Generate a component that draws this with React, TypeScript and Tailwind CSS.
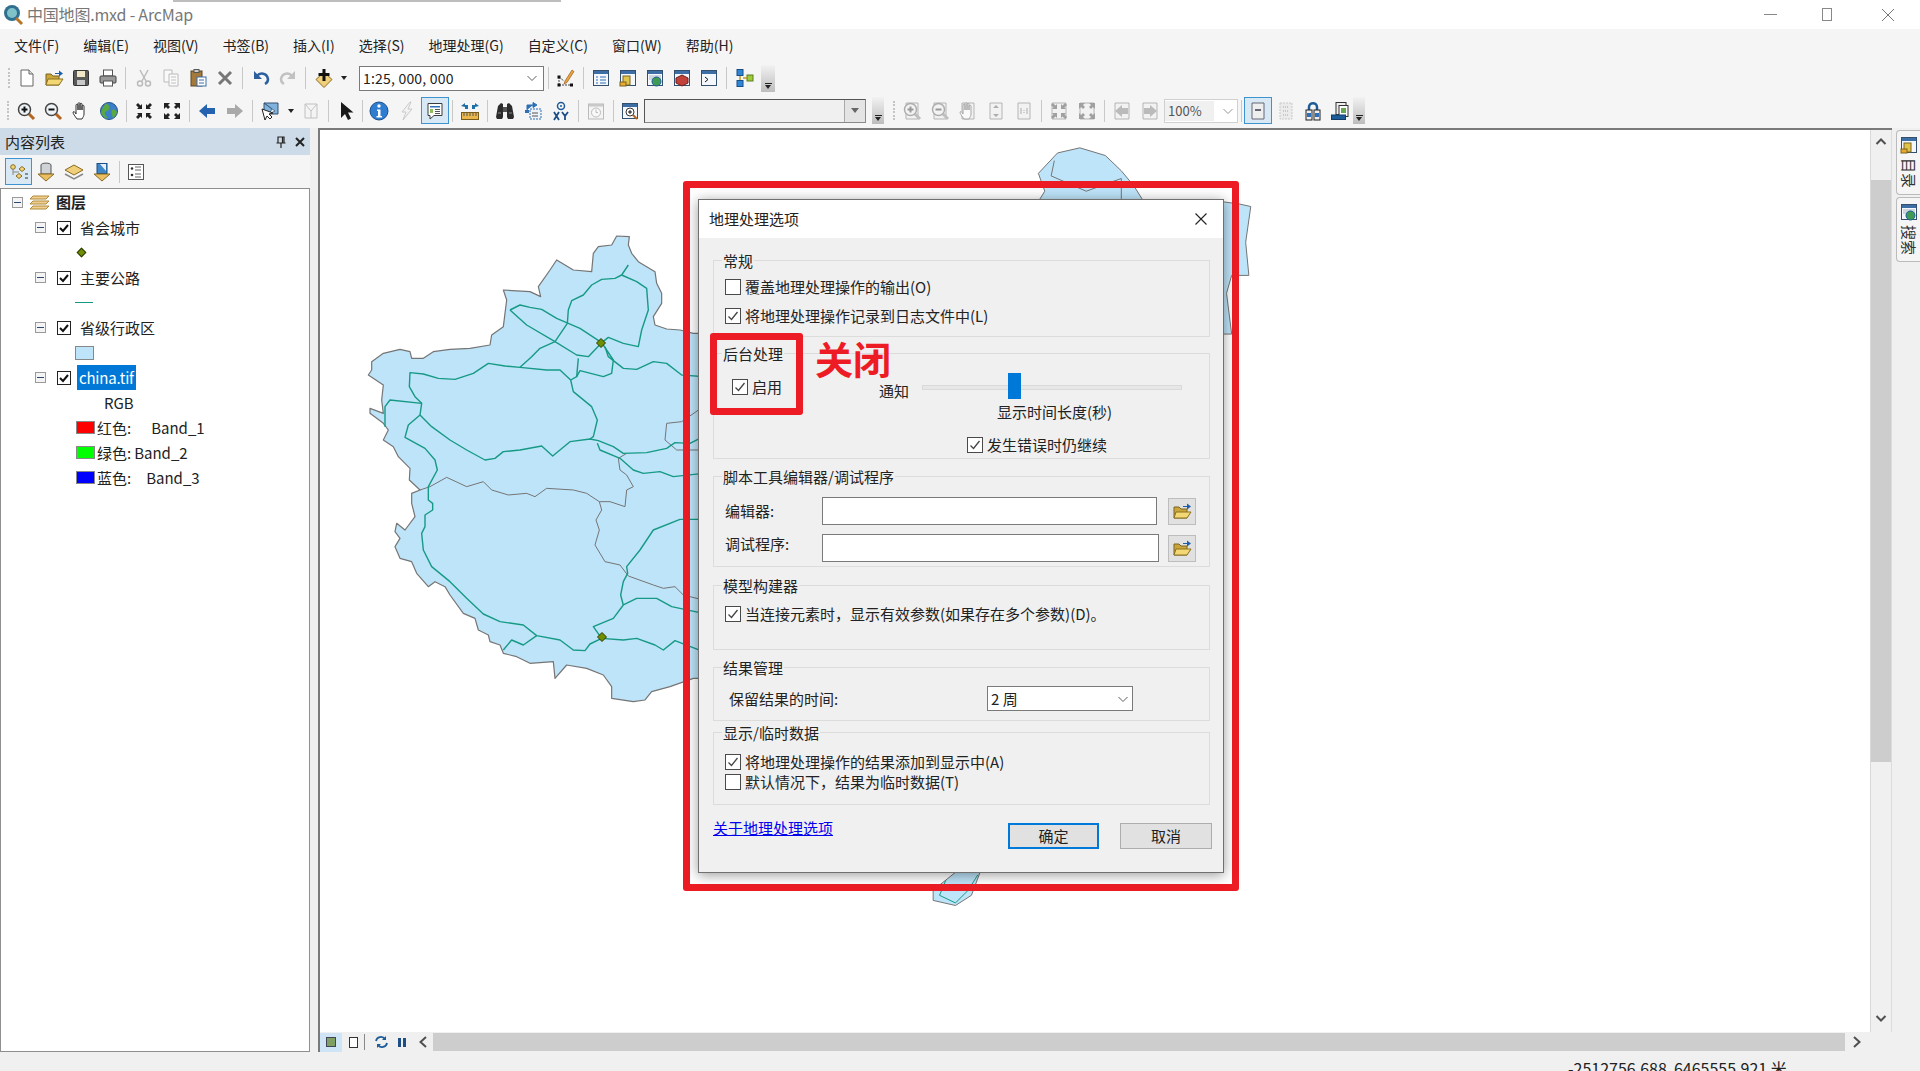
import type { ReactNode } from "react"

// little 20x20 toolbar drawings
const Ico = ({ children, off }: { children: ReactNode; off?: boolean }) => (
  <svg width="20" height="20" viewBox="0 0 20 20" className={off ? "opacity-40 grayscale" : ""}>
    {children}
  </svg>
)

const Win = ({ children }: { children?: ReactNode }) => (
  <>
    <rect x="2.5" y="2.5" width="15" height="15" fill="#f4f8fc" stroke="#34506e" />
    <rect x="3" y="3" width="14" height="3" fill="#3d6ea5" />
    {children}
  </>
)

const Folder = () => (
  <>
    <path d="M2 17V6h5l2 2h6v9z" fill="#c9a53a" stroke="#7a6420" />
    <path d="M2 17l2-6h15l-4 6z" fill="#f3d774" stroke="#8a7020" />
    <path d="M11 5h4V2.5l4 3-4 3V6h-4z" fill="#1f5fa8" />
  </>
)

const Lens = ({ mark }: { mark: "+" | "-" }) => (
  <>
    <path d="M13 13l5 5" stroke="#b5651d" strokeWidth="3" />
    <circle cx="8.5" cy="8.5" r="6" fill="#eef3f7" stroke="#444" strokeWidth="1.5" />
    <path d="M5.5 8.5h6" stroke="#111" strokeWidth="2" />
    {mark === "+" && <path d="M8.5 5.5v6" stroke="#111" strokeWidth="2" />}
  </>
)

const Hand = () => (
  <path
    d="M6 18c-2-3-4-5-4-7 1-1 2 0 3 2V4c0-1 2-1 2 0v5V2.5c0-1 2-1 2 0V9 3c0-1 2-1 2 0v6-4c0-1 2-1 2 0v8c0 2-1 3-2 5z"
    fill="#fff"
    stroke="#333"
  />
)

const Arrows = ({ out }: { out?: boolean }) => (
  <g fill="#222">
    {out ? (
      <path d="M2 2h6L6 4l2 2-2 2-2-2-2 2zM18 2v6l-2-2-2 2-2-2 2-2-2-2zM2 18v-6l2 2 2-2 2 2-2 2 2 2zM18 18h-6l2-2-2-2 2-2 2 2 2-2z" />
    ) : (
      <path d="M8 8H3l1.500-1.500L2 4l2-2 2.500 2.500L8 3zM12 8h5l-1.500-1.500L18 4l-2-2-2.500 2.500L12 3zM8 12H3l1.500 1.500L2 16l2 2 2.500-2.500L8 17zM12 12h5l-1.500 1.500L18 16l-2 2-2.500-2.500L12 17z" />
    )}
  </g>
)

const icons: Record<string, ReactNode> = {
  newDoc: (
    <>
      <path d="M4 2h8l4 4v12H4z" fill="#fff" stroke="#666" />
      <path d="M12 2v4h4" fill="#ddd" stroke="#666" />
    </>
  ),
  open: <Folder />,
  save: (
    <>
      <rect x="2.500" y="2.500" width="15" height="15" rx="1" fill="#5a5a5a" stroke="#333" />
      <rect x="6" y="3" width="8" height="6" fill="#f1e7c8" />
      <rect x="6" y="12" width="8" height="5" fill="#c9c9c9" />
    </>
  ),
  print: (
    <>
      <rect x="5.500" y="2" width="9" height="6" fill="#fff" stroke="#555" />
      <rect x="2" y="8" width="16" height="7" rx="1" fill="#9a9a9a" stroke="#444" />
      <rect x="5.500" y="13" width="9" height="5" fill="#fff" stroke="#555" />
    </>
  ),
  cut: (
    <>
      <path d="M6 2l6 11M14 2L8 13" stroke="#666" strokeWidth="1.500" />
      <circle cx="6" cy="15.500" r="2.500" fill="none" stroke="#666" strokeWidth="1.500" />
      <circle cx="14" cy="15.500" r="2.500" fill="none" stroke="#666" strokeWidth="1.500" />
    </>
  ),
  copy: (
    <>
      <path d="M3 2h8v12H3z" fill="#fff" stroke="#666" />
      <path d="M8 6h9v12H8z" fill="#fff" stroke="#666" />
      <path d="M10 9h5M10 12h5M10 15h5" stroke="#777" />
    </>
  ),
  paste: (
    <>
      <rect x="3" y="3" width="11" height="15" fill="#a5793a" stroke="#5c4420" />
      <rect x="6" y="1.500" width="5" height="3" fill="#ccc" stroke="#555" />
      <rect x="9" y="9" width="9" height="9" fill="#fff" stroke="#3a6ea8" />
      <path d="M11 12h5M11 15h5" stroke="#3a6ea8" />
    </>
  ),
  del: <path d="M4 4l12 12M16 4L4 16" stroke="#777" strokeWidth="3" />,
  undo: (
    <>
      <path d="M6 8c3-4 10-3 11 3 0 2-1 4-3 5" stroke="#2b5f9e" strokeWidth="2.500" fill="none" />
      <path d="M3 3v8h8z" fill="#2b5f9e" />
    </>
  ),
  redo: (
    <>
      <path d="M14 8c-3-4-10-3-11 3 0 2 1 4 3 5" stroke="#777" strokeWidth="2.500" fill="none" />
      <path d="M17 3v8H9z" fill="#777" />
    </>
  ),
  add: (
    <>
      <path d="M10 4l8 7.500-8 8-8-8z" fill="#f0cf7a" stroke="#8a6a20" />
      <path d="M10 1v12M4.500 6.500h11" stroke="#111" strokeWidth="3" />
    </>
  ),
  edit: (
    <>
      <path d="M9 13l7-11 2 1.500-7 11-3 1.500z" fill="#e8a33a" stroke="#99602a" strokeWidth=".7" />
      <path d="M3 9l5 4M3 9v8M3 17h13" stroke="#444" strokeDasharray="2 1" />
      <rect x="1.500" y="7.500" width="3" height="3" fill="#111" />
      <rect x="1.500" y="15.500" width="3" height="3" fill="#111" />
      <rect x="14" y="15.500" width="3" height="3" fill="#111" />
    </>
  ),
  winTable: (
    <Win>
      <path d="M5 9h2M9 9h6M5 12h2M9 12h6M5 15h2M9 15h6" stroke="#2e6fb5" />
    </Win>
  ),
  winCatalog: (
    <Win>
      <rect x="5" y="8" width="7" height="9" fill="#e2c44a" stroke="#7a6420" />
      <rect x="2" y="14" width="6" height="4" fill="#e9a92d" stroke="#7a6420" />
    </Win>
  ),
  winSearch: (
    <Win>
      <rect x="4" y="7" width="12" height="5" fill="#cfd6dd" />
      <circle cx="11.500" cy="13.500" r="4.500" fill="#3f9b54" stroke="#1c5c9c" />
    </Win>
  ),
  winBox: (
    <Win>
      <path d="M10 7l6 3v5l-6 3-6-3v-5z" fill="#c2413a" stroke="#6e1f1a" />
    </Win>
  ),
  winPy: (
    <Win>
      <path d="M6 9l3 2.500L6 14" stroke="#111" fill="none" />
    </Win>
  ),
  model: (
    <>
      <rect x="2" y="1.500" width="6" height="6" fill="#2f86d6" stroke="#184f86" />
      <rect x="2" y="12.500" width="6" height="6" fill="#2f86d6" stroke="#184f86" />
      <rect x="12" y="7" width="6" height="6" fill="#9ecb3c" stroke="#5b7f1a" />
      <path d="M5 8v4M8 10h4" stroke="#c29a22" strokeWidth="1.500" />
    </>
  ),
  zoomIn: <Lens mark="+" />,
  zoomOut: <Lens mark="-" />,
  hand: <Hand />,
  globe: (
    <>
      <circle cx="10" cy="10" r="8.500" fill="#3b7fc8" stroke="#24548c" />
      <path d="M7 2.500c3 1 4 4 3 6s-3 1-4 3 2 4 3 6c-3 0-6-3-7-6 1-4 3-7 5-9zM13 9c2-1 4 0 5 2-1 3-2 5-4 6-1-3-2-6-1-8z" fill="#5aa93f" />
    </>
  ),
  fixedIn: <Arrows />,
  fixedOut: <Arrows out />,
  back: <path d="M2 10l8-7v4h8v6h-8v4z" fill="#2563b0" />,
  forward: <path d="M18 10l-8-7v4H2v6h8v4z" fill="#a9a9a9" />,
  select: (
    <>
      <path d="M4 2h14v11H4z" fill="#7fb2dc" stroke="#34506e" />
      <path d="M4 2l8 6-3 5 6-3z" fill="#e5f0f8" stroke="#34506e" strokeWidth=".7" />
      <path d="M2 8l3 11 2-4 3 3 2-2-3-3 4-1z" fill="#fff" stroke="#222" />
    </>
  ),
  clearSelect: (
    <>
      <path d="M4 3h12v14H4z" fill="#f3f3f3" stroke="#777" />
      <path d="M4 3l6 7 6-7M10 10v7" stroke="#777" fill="none" />
    </>
  ),
  pointer: <path d="M5 1v16l4-4 3 6 3-1.500-3-6h5.500z" fill="#1a1a1a" />,
  info: (
    <>
      <circle cx="10" cy="10" r="9" fill="#2e7dd0" stroke="#1b4f8c" />
      <circle cx="10" cy="5" r="1.700" fill="#fff" />
      <path d="M8 8.500h3.500V15H13v1.500H7.500V15H9V10H8z" fill="#fff" />
    </>
  ),
  bolt: <path d="M13 1L5 11h4l-3 8 9-11h-4l3-7z" fill="#eee" stroke="#888" />,
  popup: (
    <>
      <path d="M3 2.500h14v12H9l-4 3.500v-3.500H3z" fill="#fff" stroke="#3c3c3c" />
      <path d="M5 5h10v1.500H5z" fill="#2e6fb5" />
      <rect x="5" y="8" width="3" height="4" fill="#8fbf5a" />
      <path d="M10 8.500h5M10 10.500h5M10 12.500h5" stroke="#555" />
    </>
  ),
  measure: (
    <>
      <path d="M1 5l4-3v2h3V2v6H5V6zM19 5l-4-3v2h-3V2v6h3V6z" fill="#1f6fa8" />
      <rect x="1.500" y="11.500" width="17" height="7" fill="#e8b64d" stroke="#7a5c1a" />
      <path d="M4 12v3M7 12v3M10 12v3M13 12v3M16 12v3" stroke="#555" />
    </>
  ),
  find: (
    <>
      <path d="M3 5l3-3 2 1v13l-1 2H2l-1-2zM17 5l-3-3-2 1v13l1 2h5l1-2z" fill="#2c2c2c" />
      <rect x="8" y="6" width="4" height="5" fill="#555" />
      <path d="M3 12h3M14 12h3" stroke="#888" />
    </>
  ),
  route: (
    <>
      <rect x="7" y="8" width="11" height="10" fill="#eef3f8" stroke="#2e6fb5" strokeDasharray="2 1" />
      <rect x="2" y="9" width="4" height="3" fill="#2e6fb5" />
      <path d="M4 9V4h6M10 1.500L14 4l-4 2.500z" fill="#2e6fb5" stroke="#2e6fb5" />
      <path d="M9 12h6M9 15h6" stroke="#555" />
    </>
  ),
  xy: (
    <>
      <circle cx="10" cy="5" r="3.500" fill="none" stroke="#1d5c99" strokeWidth="1.500" />
      <circle cx="10" cy="5" r="1" fill="#1d5c99" />
      <path d="M3 11l5 8M8 11l-5 8M11 11l3 4 3-4M14 15v4" stroke="#1d4f86" strokeWidth="1.800" fill="none" />
    </>
  ),
  clock: (
    <>
      <rect x="2.500" y="3" width="15" height="15" fill="#f4f4f4" stroke="#666" />
      <rect x="3" y="3" width="14" height="2.500" fill="#888" />
      <circle cx="10" cy="11.500" r="4.500" fill="#fff" stroke="#666" />
      <path d="M10 8.500v3h2" stroke="#666" fill="none" />
    </>
  ),
  goTo: (
    <Win>
      <circle cx="10" cy="11" r="4" fill="#fff" stroke="#333" />
      <path d="M8 11h4M10 9v4" stroke="#111" />
      <path d="M13 14l4 4" stroke="#b5651d" strokeWidth="2" />
    </Win>
  ),
  pageIn: (
    <>
      <path d="M4 2h12v16H4z" fill="#eee" stroke="#555" />
      <Lens mark="+" />
    </>
  ),
  pageOut: (
    <>
      <path d="M4 2h12v16H4z" fill="#eee" stroke="#555" />
      <Lens mark="-" />
    </>
  ),
  pageHand: (
    <>
      <path d="M4 2h12v16H4z" fill="#eee" stroke="#555" />
      <Hand />
    </>
  ),
  pageFit: (
    <>
      <path d="M4 2h12v16H4z" fill="#eee" stroke="#555" />
      <path d="M10 4l3 3H7zM10 16l3-3H7z" fill="#444" />
    </>
  ),
  pageOne: (
    <>
      <path d="M4 2h12v16H4z" fill="#eee" stroke="#555" />
      <path d="M7 7v6M13 7v6M10 9v1M10 11v1" stroke="#444" />
    </>
  ),
  pageFixedIn: (
    <>
      <path d="M3 2h14v16H3z" fill="#eee" stroke="#555" />
      <Arrows />
    </>
  ),
  pageFixedOut: (
    <>
      <path d="M3 2h14v16H3z" fill="#eee" stroke="#555" />
      <Arrows out />
    </>
  ),
  pageBack: (
    <>
      <path d="M3 2h14v16H3z" fill="#eee" stroke="#555" />
      <path d="M3 10l7-6v3h6v6h-6v3z" fill="#666" />
    </>
  ),
  pageFwd: (
    <>
      <path d="M3 2h14v16H3z" fill="#eee" stroke="#555" />
      <path d="M17 10l-7-6v3H4v6h6v3z" fill="#666" />
    </>
  ),
  layoutOn: (
    <>
      <path d="M4 2h12v16H4z" fill="#eee" stroke="#667" />
      <path d="M7 9h6" stroke="#667" strokeWidth="2" />
    </>
  ),
  layoutGrid: (
    <>
      <path d="M4 2h12v16H4z" fill="#ddd" stroke="#888" strokeDasharray="2 1" />
      <path d="M7 6h6M7 10h6M7 14h6" stroke="#888" strokeWidth="2" strokeDasharray="1 1" />
    </>
  ),
  changeLayout: (
    <>
      <path d="M6 9V6c0-5 8-5 8 0v3" stroke="#1d5c99" strokeWidth="2.500" fill="none" />
      <rect x="3" y="9" width="6" height="10" fill="#eee" stroke="#222" />
      <rect x="11" y="9" width="6" height="10" fill="#eee" stroke="#222" />
      <rect x="4" y="12" width="4" height="4" fill="#2e6fb5" />
      <rect x="12" y="12" width="4" height="4" fill="#2e6fb5" />
    </>
  ),
  dataDriven: (
    <>
      <rect x="6" y="1.500" width="10" height="12" fill="#eee" stroke="#333" />
      <rect x="9" y="4.500" width="9" height="11" fill="#fff" stroke="#333" />
      <rect x="11" y="7" width="5" height="5" fill="#6aa84f" />
      <rect x="1.500" y="14" width="14" height="4.500" fill="#1d5c99" stroke="#123c66" />
    </>
  ),
  tocList: (
    <>
      <circle cx="4" cy="5" r="2.300" fill="#f2d47a" stroke="#8a6a20" />
      <path d="M4 7v6M4 10h6" stroke="#888" />
      <path d="M10 7l3-2.500L16 7l-3 2.500zM7 14l3-2.500 3 2.500-3 2.500z" fill="#f2d47a" stroke="#8a6a20" />
      <path d="M16 12h3M16 16h3" stroke="#333" />
    </>
  ),
  tocDb: (
    <>
      <path d="M5 3c0-2.500 10-2.500 10 0v9H5z" fill="#cfd2d6" stroke="#555" />
      <path d="M2 12l8 7 8-7z" fill="#ecbe62" stroke="#8a6a20" />
    </>
  ),
  tocVis: (
    <>
      <path d="M10 13l9-5-9-5-9 5z" fill="#f0cf7a" stroke="#8a6a20" />
      <path d="M1 12l9 5 9-5" fill="none" stroke="#888" strokeWidth="1.500" />
    </>
  ),
  tocSel: (
    <>
      <rect x="5" y="1.500" width="10" height="10" fill="#3f86c6" stroke="#184f86" />
      <path d="M8 2h6v7z" fill="#e6f0f8" />
      <path d="M2 12l8 7 8-7z" fill="#ecbe62" stroke="#8a6a20" />
    </>
  ),
  tocOpts: (
    <>
      <rect x="2.500" y="2.500" width="15" height="15" fill="#fff" stroke="#555" />
      <circle cx="6" cy="6.500" r="1.300" fill="#333" />
      <circle cx="6" cy="13" r="1.300" fill="#333" />
      <path d="M9 5h6M9 8h6M9 12h6M9 15h6" stroke="#666" />
    </>
  ),
}

const Tool = ({ name, off, on, w = "w-[27px]" }: { name: string; off?: boolean; on?: boolean; w?: string }) => (
  <span
    className={`${w} h-[27px] shrink-0 flex items-center justify-center ${
      on ? "bg-[#d8e8f4] outline outline-[#3f93cf] -outline-offset-1" : ""
    }`}
  >
    <Ico off={off}>{icons[name]}</Ico>
  </span>
)

const Sep = ({ w = "w-[9px]" }: { w?: string }) => (
  <span className={`${w} h-[22px] shrink-0 flex justify-center`}>
    <span className="w-px h-full bg-[#c8c8c8]" />
  </span>
)

const Grip = () => (
  <span className="w-[8px] h-[22px] shrink-0 flex flex-col items-center justify-between py-[1px]">
    {[0, 1, 2, 3, 4, 5].map((i) => (
      <span key={i} className="w-[2px] h-[2px] bg-[#c4c4c4]" />
    ))}
  </span>
)

const Caret = ({ w = "w-[14px]" }: { w?: string }) => (
  <span className={`${w} shrink-0 flex justify-center`}>
    <span className="border-x-[3.5px] border-x-transparent border-t-[4px] border-t-[#222]" />
  </span>
)

const Overflow = ({ w = "w-[14px]" }: { w?: string }) => (
  <span className={`${w} h-[27px] shrink-0 flex flex-col items-center justify-end pb-[3px] gap-[1px] bg-gradient-to-b from-[#f2f2f2] to-[#bdbdbd]`}>
    <span className="w-[7px] h-px bg-[#222]" />
    <span className="border-x-[3.5px] border-x-transparent border-t-[4px] border-t-[#222]" />
  </span>
)

const Chevron = ({ color = "#606060" }: { color?: string }) => (
  <svg width="12" height="12" viewBox="0 0 12 12">
    <path d="M1.500 4l4.500 4.500L10.500 4" fill="none" stroke={color} strokeWidth="1" />
  </svg>
)

const Box = ({ checked, toc }: { checked?: boolean; toc?: boolean }) =>
  toc ? (
    <span className="w-[14px] h-[14px] shrink-0 border border-[#222] bg-white flex items-center justify-center">
      <svg width="12" height="12" viewBox="0 0 12 12">
        <path d="M2 6l3 3 5-6" fill="none" stroke="#111" strokeWidth="2" />
      </svg>
    </span>
  ) : (
    <span className="w-[16px] h-[16px] shrink-0 border border-[#4a4a4a] bg-white flex items-center justify-center">
      {checked && (
        <svg width="14" height="14" viewBox="0 0 14 14">
          <path d="M2.500 7.500l3 3 6-7.500" fill="none" stroke="#444" strokeWidth="1.300" />
        </svg>
      )}
    </span>
  )

const Check = ({ label, checked }: { label: string; checked?: boolean }) => (
  <div className="flex items-center gap-[4px] h-[16px] whitespace-nowrap">
    <Box checked={checked} />
    <span>{label}</span>
  </div>
)

const Group = ({ title, h, children, cls = "" }: { title: string; h: string; children?: ReactNode; cls?: string }) => (
  <div className={`relative ${h} border border-[#dcdcdc] ${cls}`}>
    <span className="absolute left-[8px] -top-[10px] px-[1px] bg-[#f0f0f0] whitespace-nowrap">{title}</span>
    {children}
  </div>
)

const Browse = ({ cls = "" }: { cls?: string }) => (
  <span className={`w-[28px] h-[27px] shrink-0 bg-[#e1e1e1] border border-[#bdbdbd] flex items-center justify-center ${cls}`}>
    <Ico>
      <Folder />
    </Ico>
  </span>
)

// traced at 3x from the page: x = 360 + px / 3, y = 230 + py / 3
const land =
  "1100,310 1000,310 960,300 920,297 885,285 880,260 905,220 905,190 890,160 885,125 860,110 835,95 815,70 805,45 808,20 770,18 755,45 715,50 700,70 695,125 640,120 590,90 570,120 535,170 542,200 510,185 430,180 440,210 430,290 395,315 390,345 330,355 270,358 220,365 190,385 155,385 150,365 120,358 70,370 35,395 35,420 25,435 70,465 65,510 70,550 30,535 30,550 70,580 85,600 70,630 100,650 115,680 150,715 148,750 180,780 155,790 155,820 165,860 135,900 110,880 105,905 120,925 105,950 120,985 155,995 170,1030 205,1070 225,1055 255,1070 270,1095 310,1150 345,1165 355,1200 385,1215 390,1235 420,1245 430,1270 470,1280 510,1300 580,1295 585,1345 620,1305 680,1315 730,1335 755,1370 755,1405 820,1415 855,1410 875,1385 930,1370 1000,1345 1100,1345"

const roads = [
  "805,105 785,135 765,145 725,148 695,165 670,195 635,212 625,240 622,280 585,335 540,355 515,380 480,412 435,408 385,400 340,430 285,448 235,445 190,432 150,428 148,470 165,500 185,520 180,555 215,590 270,630 320,660 375,690 405,685 430,665 480,660 545,648 578,678 630,635 690,627 715,632 760,650 790,670 860,668 920,655 945,638 990,640 1030,620",
  "785,135 830,155 860,175 865,240 845,300 835,350 790,340 745,322 725,338",
  "450,240 480,225 510,232 545,238 590,265 660,295 725,338 760,390 755,430 730,440 660,422 650,440 632,450 600,420 560,420 480,412",
  "450,240 500,285 585,335 650,375 685,380 725,338",
  "655,385 650,440",
  "735,350 745,380 790,415 830,418 880,395 920,400 965,435 1030,440",
  "632,450 640,485 695,530 712,570 700,620 690,627",
  "185,520 90,510 75,530 75,590",
  "180,555 145,585 135,622 195,655 225,690 232,720 205,770 205,810 218,820 218,840 195,855 195,890 185,910 190,960 215,1010 270,1055 320,1105 370,1152 420,1175 490,1185 530,1217 600,1230 640,1260 675,1262 690,1242 725,1225 790,1230 830,1225 885,1245 910,1260 945,1232 1030,1265",
  "530,1217 490,1245 455,1230 430,1260",
  "725,1225 700,1190 760,1165 790,1125 830,1105 890,1105 935,1130 1030,1150",
  "790,1125 782,1095 790,1055 803,1030 800,1010 840,960 880,900 960,868 1030,868",
  "712,640 720,660 780,685 820,720 850,730 900,725 940,740 1030,730",
]

const borders = [
  "180,780 210,770 260,742 320,770 370,755 395,780 445,795 500,790 525,800 560,775 640,780 680,790 718,815 750,815 795,830 800,780 820,770 800,735 780,720 775,685 800,670",
  "718,815 725,840 708,870 718,900 705,945 735,995 780,1005 805,1038 880,1065 910,1075 945,1070 970,1095 1030,1110",
  "1030,530 965,575 920,580 915,630 950,660 1030,660",
]

const ChinaMap = () => (
  <svg className="absolute -left-[320px] -top-[130px]" width="1920" height="1071" viewBox="0 0 1920 1071">
    <g transform="translate(360 230) scale(.33333)">
      <polygon points={land} fill="#bee4f9" stroke="#757575" strokeWidth="1.200" strokeLinejoin="round" vectorEffect="non-scaling-stroke" />
      {borders.map((p) => (
        <polyline key={p} points={p} fill="none" stroke="#757575" strokeLinejoin="round" vectorEffect="non-scaling-stroke" />
      ))}
      {roads.map((p) => (
        <polyline key={p} points={p} fill="none" stroke="#169a84" strokeWidth="1.400" strokeLinejoin="round" vectorEffect="non-scaling-stroke" />
      ))}
    </g>
    {/* islands and the edge that shows round the dialog */}
    <g transform="translate(340 130) scale(.6378 .5102)">
      <polygon points="1095,85 1125,45 1160,35 1200,50 1225,80 1245,110 1265,150 1090,150 1105,120" fill="#bee4f9" stroke="#757575" vectorEffect="non-scaling-stroke" />
      <polygon points="1380,140 1410,145 1428,150 1420,220 1425,285 1398,285 1390,320 1398,400 1380,400" fill="#bee4f9" stroke="#757575" vectorEffect="non-scaling-stroke" />
      <polygon points="930,1490 970,1450 1005,1450 990,1500 965,1520 930,1510" fill="#bee4f9" stroke="#757575" vectorEffect="non-scaling-stroke" />
      <polyline points="950,1470 940,1500 965,1515 985,1490 1000,1460" fill="none" stroke="#169a84" vectorEffect="non-scaling-stroke" />
      <polyline points="1120,60 1115,90 1170,120 1225,95 1225,135" fill="none" stroke="#757575" vectorEffect="non-scaling-stroke" />
    </g>
    <path d="M601 338.500l4.500 4.500-4.500 4.500-4.500-4.500z" fill="#6f8f00" stroke="#2c3a00" />
    <path d="M602 632.500l4.500 4.500-4.500 4.500-4.500-4.500z" fill="#6f8f00" stroke="#2c3a00" />
  </svg>
)

const TocRow = ({ children, cls = "" }: { children: ReactNode; cls?: string }) => (
  <div className={`h-[25px] flex items-center whitespace-nowrap ${cls}`}>{children}</div>
)

const Expander = ({ cls = "ml-[34px]" }: { cls?: string }) => (
  <span className={`w-[11px] h-[11px] shrink-0 border border-[#9a9a9a] bg-[#f4f4f4] flex items-center justify-center ${cls}`}>
    <span className="w-[7px] h-px bg-[#2c4a70]" />
  </span>
)

const Layer = ({ label, active }: { label: string; active?: boolean }) => (
  <TocRow>
    <Expander />
    <span className="ml-[11px]">
      <Box toc />
    </span>
    {active ? (
      <span className="ml-[6px] px-[2px] h-[25px] leading-[25px] tracking-[-0.2px] bg-[#0078d7] text-white">{label}</span>
    ) : (
      <span className="ml-[9px]">{label}</span>
    )}
  </TocRow>
)

const Band = ({ color, label, band, gap }: { color: string; label: string; band: string; gap: string }) => (
  <TocRow cls="pl-[75px]">
    <span className="w-[19px] h-[13px] border border-[#888]" style={{ background: color }} />
    <span className="ml-[2px]">{label}</span>
    <span className={gap}>{band}</span>
  </TocRow>
)

const DockTab = ({ name, label }: { name: string; label: string }) => (
  <div className="h-[65px] flex flex-col items-center gap-[3px] border border-r-0 border-[#bbb] rounded-l-[4px] bg-[#f5f5f5] pt-[4px]">
    <Ico>{icons[name]}</Ico>
    <span className="[writing-mode:vertical-rl] [text-orientation:sideways] text-[15px] leading-[20px] text-[#333]">{label}</span>
  </div>
)

const menus = ["文件(F)", "编辑(E)", "视图(V)", "书签(B)", "插入(I)", "选择(S)", "地理处理(G)", "自定义(C)", "窗口(W)", "帮助(H)"]

export default function App() {
  return (
    <div className="relative w-[1920px] h-[1071px] overflow-hidden flex flex-col bg-[#f0f0f0] text-[15px] leading-[20px] text-[#222] font-['Noto_Sans_CJK_SC','Noto_Sans',sans-serif]">
      {/* title bar */}
      <div className="relative h-[29px] shrink-0 bg-white flex items-center pl-[2px]">
        <svg width="22" height="22" viewBox="0 0 22 22">
          <circle cx="10" cy="9" r="8" fill="#2f6f8f" />
          <circle cx="10" cy="9" r="5" fill="#7fc3c9" />
          <path d="M14 14l6 6" stroke="#b5762a" strokeWidth="3" />
        </svg>
        <span className="ml-[3px] text-[16px] tracking-[-0.2px] text-[#777] -mt-[2px]">中国地图.mxd - ArcMap</span>
        <div className="ml-auto flex items-center text-[#777]">
          <span className="w-[13px] h-px bg-[#888] mr-[45px]" />
          <span className="w-[10px] h-[13px] border border-[#888] mr-[49px]" />
          <svg width="14" height="14" viewBox="0 0 14 14" className="mr-[25px]">
            <path d="M1 1l12 12M13 1L1 13" stroke="#777" />
          </svg>
        </div>
        <span className="absolute left-[173px] top-0 w-[388px] h-[2px] bg-[#bdbdbd]" />
      </div>

      {/* menu */}
      <div className="h-[32px] shrink-0 bg-[#f5f5f5] flex items-center pl-[14px] gap-[24px] text-[14px] text-[#222]">
        {menus.map((m) => (
          <span key={m}>{m}</span>
        ))}
      </div>

      {/* standard toolbar */}
      <div className="h-[34px] shrink-0 bg-[#f5f5f5] flex items-center pl-[5px]">
        <Grip />
        <Tool name="newDoc" />
        <Tool name="open" />
        <Tool name="save" />
        <Tool name="print" />
        <Sep />
        <Tool name="cut" off />
        <Tool name="copy" off />
        <Tool name="paste" />
        <Tool name="del" />
        <Sep />
        <Tool name="undo" />
        <Tool name="redo" off />
        <Sep />
        <Tool name="add" />
        <Caret />
        <div className="ml-[8px] w-[185px] h-[25px] shrink-0 bg-white border border-[#7a7a7a] flex items-center justify-between pl-[3px] pr-[5px] text-[14px] tracking-[0.2px]">
          1:25, 000, 000
          <Chevron />
        </div>
        <Sep w="w-[8px]" />
        <Tool name="edit" />
        <Sep w="w-[8px]" />
        <Tool name="winTable" />
        <Tool name="winCatalog" />
        <Tool name="winSearch" />
        <Tool name="winBox" />
        <Tool name="winPy" />
        <Sep />
        <Tool name="model" />
        <span className="w-[3px]" />
        <Overflow />
      </div>

      {/* tools + layout toolbars */}
      <div className="h-[33px] shrink-0 bg-[#f5f5f5] flex items-center pl-[4px] pb-[2px]">
        <Grip />
        <Tool name="zoomIn" w="w-[27px]" />
        <Tool name="zoomOut" w="w-[28px]" />
        <Tool name="hand" w="w-[28px]" />
        <Tool name="globe" w="w-[28px]" />
        <Sep w="w-[7px]" />
        <Tool name="fixedIn" w="w-[28px]" />
        <Tool name="fixedOut" w="w-[28px]" />
        <Sep w="w-[7px]" />
        <Tool name="back" w="w-[28px]" />
        <Tool name="forward" w="w-[28px]" />
        <Sep w="w-[7px]" />
        <Tool name="select" w="w-[28px]" />
        <Caret w="w-[13px]" />
        <Tool name="clearSelect" off w="w-[28px]" />
        <Sep w="w-[7px]" />
        <Tool name="pointer" w="w-[28px]" />
        <Sep w="w-[5px]" />
        <Tool name="info" w="w-[28px]" />
        <Tool name="bolt" off w="w-[28px]" />
        <Tool name="popup" on w="w-[28px]" />
        <Sep w="w-[7px]" />
        <Tool name="measure" w="w-[28px]" />
        <Sep w="w-[7px]" />
        <Tool name="find" w="w-[28px]" />
        <Tool name="route" w="w-[28px]" />
        <Tool name="xy" w="w-[28px]" />
        <Sep w="w-[7px]" />
        <Tool name="clock" off w="w-[28px]" />
        <Sep w="w-[6px]" />
        <Tool name="goTo" w="w-[28px]" />
        <div className="w-[222px] h-[24px] shrink-0 bg-[#f0f0f0] border border-[#8a8a8a] border-t-[#555] border-l-[#555] flex justify-end">
          <span className="w-[21px] h-full bg-[#e4e4e4] border-l border-[#aaa] flex items-center justify-center">
            <span className="border-x-[4px] border-x-transparent border-t-[5px] border-t-[#666]" />
          </span>
        </div>
        <span className="w-[6px]" />
        <Overflow w="w-[12px]" />
        <span className="w-[6px]" />
        <Grip />
        <Tool name="pageIn" off w="w-[28px]" />
        <Tool name="pageOut" off w="w-[28px]" />
        <Tool name="pageHand" off w="w-[28px]" />
        <Tool name="pageFit" off w="w-[28px]" />
        <Tool name="pageOne" off w="w-[28px]" />
        <Sep w="w-[7px]" />
        <Tool name="pageFixedIn" off w="w-[28px]" />
        <Tool name="pageFixedOut" off w="w-[28px]" />
        <Sep w="w-[7px]" />
        <Tool name="pageBack" off w="w-[28px]" />
        <Tool name="pageFwd" off w="w-[28px]" />
        <div className="w-[74px] h-[24px] shrink-0 bg-white border border-[#d0d0d0] flex items-center justify-between pr-[3px] text-[13px] text-[#555]">
          <span className="bg-[#f0f0f0] pl-[3px] pr-[12px]">100%</span>
          <Chevron color="#999" />
        </div>
        <Sep w="w-[6px]" />
        <Tool name="layoutOn" on w="w-[28px]" />
        <Tool name="layoutGrid" off w="w-[27px]" />
        <Tool name="changeLayout" w="w-[27px]" />
        <Tool name="dataDriven" w="w-[27px]" />
        <Overflow w="w-[12px]" />
      </div>

      {/* main area */}
      <div className="flex-1 min-h-0 flex">
        {/* table of contents */}
        <div className="w-[310px] shrink-0 flex flex-col">
          <div className="h-[27px] shrink-0 bg-[#ccdbe7] flex items-center pl-[5px] pr-[4px]">
            <span>内容列表</span>
            <svg width="12" height="12" viewBox="0 0 12 12" className="ml-auto mr-[7px]">
              <path d="M3 1h6v6H3zM1.500 7h9M6 7v5M7.500 1v6" fill="none" stroke="#222" strokeWidth="1.200" />
            </svg>
            <svg width="12" height="12" viewBox="0 0 12 12">
              <path d="M2 2l8 8M10 2l-8 8" stroke="#222" strokeWidth="2" />
            </svg>
          </div>
          <div className="h-[33px] shrink-0 bg-[#f5f5f5] flex items-center pl-[5px]">
            <Tool name="tocList" on />
            <Tool name="tocDb" w="w-[28px]" />
            <Tool name="tocVis" w="w-[28px]" />
            <Tool name="tocSel" w="w-[28px]" />
            <Sep w="w-[6px]" />
            <Tool name="tocOpts" w="w-[28px]" />
          </div>
          <div className="flex-1 min-h-0 bg-white border border-[#8f8f8f] text-[#222]">
            <div className="h-[26px] flex items-center">
              <Expander cls="ml-[11px]" />
              <svg width="22" height="18" viewBox="0 0 22 18" className="ml-[6px]">
                <path d="M4 3h16l-3 3H1zM4 8h16l-3 3H1zM4 13h16l-3 3H1z" fill="#f0cf8f" stroke="#b08a3a" />
              </svg>
              <span className="ml-[5px] font-bold">图层</span>
            </div>
            <Layer label="省会城市" />
            <TocRow cls="pl-[77px]">
              <span className="w-[7px] h-[7px] rotate-45 bg-[#6f8f00] border border-[#2c3a00]" />
            </TocRow>
            <Layer label="主要公路" />
            <TocRow cls="pl-[74px]">
              <span className="w-[18px] h-px bg-[#169a84]" />
            </TocRow>
            <Layer label="省级行政区" />
            <TocRow cls="pl-[74px]">
              <span className="w-[19px] h-[14px] bg-[#bee4f9] border border-[#888]" />
            </TocRow>
            <Layer label="china.tif" active />
            <TocRow cls="pl-[103px]">RGB</TocRow>
            <Band color="#ff0000" label="红色:" band="Band_1" gap="ml-[20px]" />
            <Band color="#00ff00" label="绿色:" band="Band_2" gap="ml-[3px]" />
            <Band color="#0000ff" label="蓝色:" band="Band_3" gap="ml-[15px]" />
          </div>
        </div>
        <div className="w-[8px] shrink-0" />

        {/* map column */}
        <div className="w-[1574px] shrink-0 flex flex-col border-l-2 border-[#7a7a7a]">
          <div className="flex-1 min-h-0 flex border-t-2 border-[#7a7a7a]">
            <div className="relative flex-1 min-w-0 bg-white overflow-hidden border-r border-[#d9d9d9]">
              <ChinaMap />
            </div>
            <div className="w-[20px] shrink-0 bg-[#f0f0f0] flex flex-col items-center">
              <svg width="14" height="24" viewBox="0 0 14 24">
                <path d="M2.500 14l4.500-4.500 4.500 4.500" fill="none" stroke="#505050" strokeWidth="2" />
              </svg>
              <span className="mt-[26px] w-full h-[582px] bg-[#cdcdcd]" />
              <svg width="14" height="24" viewBox="0 0 14 24" className="mt-auto mb-[2px]">
                <path d="M2.500 10l4.500 4.500 4.500-4.500" fill="none" stroke="#505050" strokeWidth="2" />
              </svg>
            </div>
            <div className="w-px bg-[#dcdcdc]" />
          </div>
          <div className="h-[20px] shrink-0 flex items-center bg-[#f0f0f0]">
            <span className="w-[22px] h-[19px] bg-[#cfe4f5] flex items-center justify-center">
              <span className="w-[10px] h-[10px] bg-[#7f9f63] border border-[#445]" />
            </span>
            <span className="w-[22px] flex justify-center">
              <span className="w-[9px] h-[11px] border border-[#333] bg-white" />
            </span>
            <span className="w-px h-[16px] bg-[#888]" />
            <svg width="17" height="14" viewBox="0 0 17 14" className="ml-[8px]">
              <path d="M3 6a5 5 0 0 1 9-2M14 8a5 5 0 0 1-9 2" fill="none" stroke="#1d5c99" strokeWidth="1.800" />
              <path d="M13 1v4H9zM4 13V9h4z" fill="#1d5c99" />
            </svg>
            <span className="ml-[8px] flex gap-[2px]">
              <span className="w-[3px] h-[9px] bg-[#1d4f86]" />
              <span className="w-[3px] h-[9px] bg-[#1d4f86]" />
            </span>
            <svg width="12" height="14" viewBox="0 0 12 14" className="ml-[11px]">
              <path d="M9 2L3.500 7 9 12" fill="none" stroke="#505050" strokeWidth="2" />
            </svg>
            <span className="ml-[4px] w-[1412px] h-[18px] bg-[#cdcdcd]" />
            <svg width="12" height="14" viewBox="0 0 12 14" className="ml-[6px]">
              <path d="M3 2l5.500 5L3 12" fill="none" stroke="#505050" strokeWidth="2" />
            </svg>
          </div>
        </div>

        {/* dock tabs */}
        <div className="flex-1 min-w-0 pl-[4px] pt-[2px] flex flex-col gap-[2px]">
          <DockTab name="winCatalog" label="目录" />
          <DockTab name="winSearch" label="搜索" />
        </div>
      </div>

      {/* status bar */}
      <div className="h-[19px] shrink-0 overflow-hidden bg-[#f0f0f0] pl-[1568px] pt-[6px] text-[16px] leading-[20px] whitespace-pre text-[#222]">
        -2512756.688  6465555.921 米
      </div>

      {/* annotation frame around the dialog */}
      <div className="absolute left-[683px] top-[181px] w-[556px] h-[710px] border-[7px] border-[#ed1c24] rounded-[3px]" />

      {/* geoprocessing options dialog */}
      <div className="absolute left-[698px] top-[199px] w-[526px] h-[674px] bg-[#f0f0f0] border border-[#707070] shadow-[0_2px_12px_rgba(0,0,0,0.4)] flex flex-col">
        <div className="h-[38px] shrink-0 bg-white flex items-center justify-between pl-[10px] pr-[15px]">
          <span className="-mt-[1px]">地理处理选项</span>
          <svg width="14" height="14" viewBox="0 0 14 14">
            <path d="M1.500 1.500l11 11M12.500 1.500l-11 11" stroke="#222" strokeWidth="1.100" />
          </svg>
        </div>
        <div className="flex-1 pl-[14px] pt-[22px]">
          <Group title="常规" h="h-[77px]" cls="w-[497px] pl-[11px] pt-[18px] flex flex-col gap-[13px]">
            <Check label="覆盖地理处理操作的输出(O)" />
            <Check label="将地理处理操作记录到日志文件中(L)" checked />
          </Group>
          <Group title="后台处理" h="h-[106px]" cls="w-[497px] mt-[16px] pt-[20px] pl-[18px]">
            <div className="h-[26px] flex items-center whitespace-nowrap">
              <Check label="启用" checked />
              <span className="ml-[97px] w-[43px] pt-[7px]">通知</span>
              <div className="relative w-[260px] h-[5px] bg-[#e7e7e7] border border-[#dadada]">
                <span className="absolute left-[85px] -top-[13px] w-[13px] h-[26px] bg-[#0078d7]" />
              </div>
            </div>
            <div className="mt-[2px] ml-[265px] whitespace-nowrap">显示时间长度(秒)</div>
            <div className="mt-[15px] ml-[235px]">
              <Check label="发生错误时仍继续" checked />
            </div>
          </Group>
          <Group title="脚本工具编辑器/调试程序" h="h-[91px]" cls="w-[497px] mt-[17px] pt-[20px] pl-[11px]">
            <div className="flex items-center">
              <span className="w-[97px]">编辑器:</span>
              <span className="w-[335px] h-[28px] bg-white border border-[#7a7a7a]" />
              <Browse cls="ml-[11px]" />
            </div>
            <div className="flex items-center mt-[9px]">
              <span className="w-[97px] -mt-[8px]">调试程序:</span>
              <span className="w-[337px] h-[28px] bg-white border border-[#7a7a7a]" />
              <Browse cls="ml-[9px]" />
            </div>
          </Group>
          <Group title="模型构建器" h="h-[65px]" cls="w-[497px] mt-[18px] pt-[20px] pl-[11px]">
            <Check label="当连接元素时，显示有效参数(如果存在多个参数)(D)。" checked />
          </Group>
          <Group title="结果管理" h="h-[54px]" cls="w-[497px] mt-[17px] pt-[18px] pl-[15px]">
            <div className="flex items-center">
              <span className="w-[258px]">保留结果的时间:</span>
              <div className="w-[146px] h-[25px] bg-white border border-[#7a7a7a] flex items-center justify-between pl-[3px] pr-[3px]">
                <span>2 周</span>
                <Chevron />
              </div>
            </div>
          </Group>
          <Group title="显示/临时数据" h="h-[73px]" cls="w-[497px] mt-[11px] pt-[21px] pl-[11px] flex flex-col gap-[4px]">
            <Check label="将地理处理操作的结果添加到显示中(A)" checked />
            <Check label="默认情况下，结果为临时数据(T)" />
          </Group>
          <div className="w-[499px] mt-[18px] flex items-start">
            <span className="-mt-[5px] text-[#0000ee] underline">关于地理处理选项</span>
            <span className="ml-auto w-[91px] h-[26px] bg-[#e1e1e1] border-2 border-[#0078d7] flex items-center justify-center">确定</span>
            <span className="ml-[21px] w-[92px] h-[26px] bg-[#e1e1e1] border border-[#adadad] flex items-center justify-center">取消</span>
          </div>
        </div>
      </div>

      {/* annotation callout on the background-processing group */}
      <div className="absolute left-[710px] top-[333px] w-[93px] h-[82px] border-[7px] border-[#ed1c24] rounded-[3px]" />
      <div className="absolute left-[815px] top-[334px] text-[38px] leading-[48px] font-bold text-[#ed1c24]">关闭</div>
    </div>
  )
}
